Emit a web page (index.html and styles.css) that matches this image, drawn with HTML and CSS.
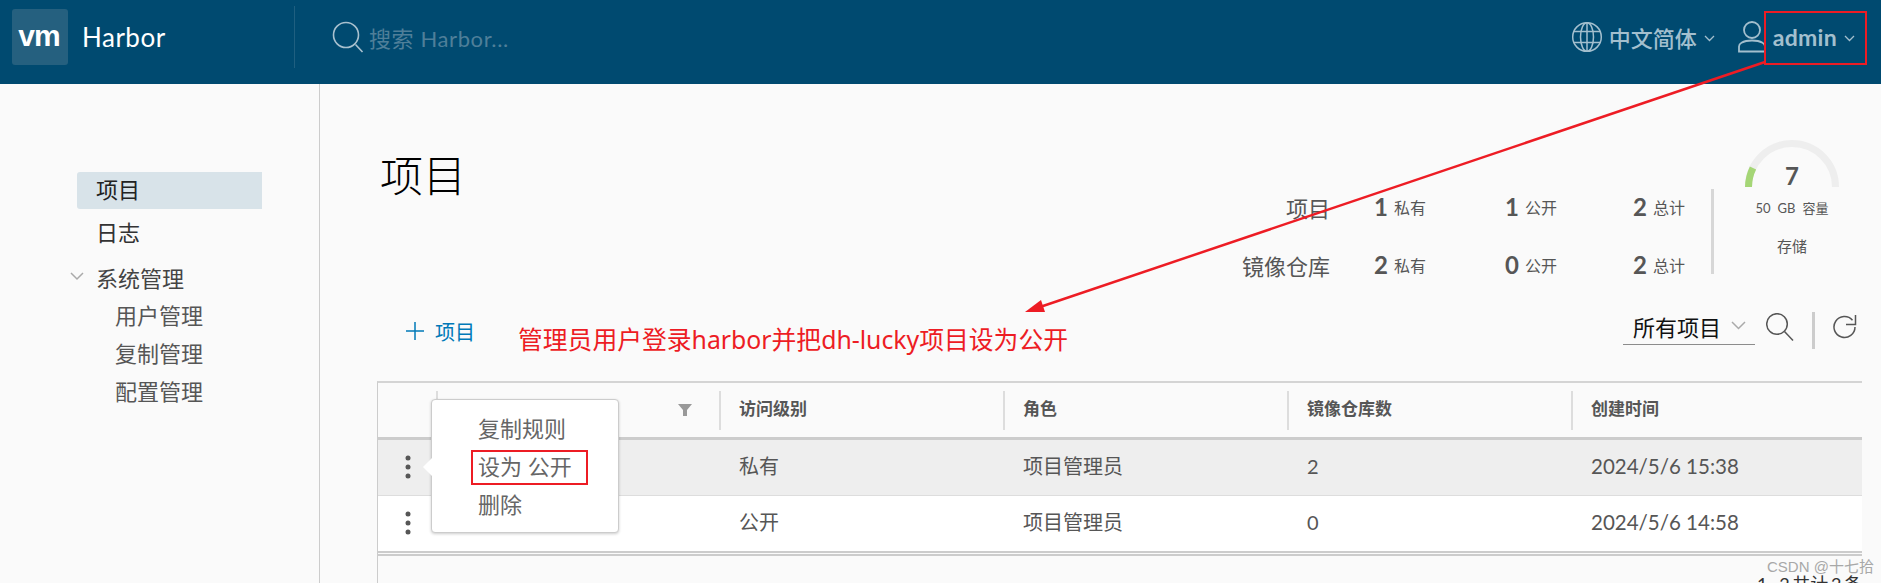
FILE: index.html
```html
<!DOCTYPE html>
<html lang="zh-CN">
<head>
<meta charset="utf-8">
<title>Harbor</title>
<link rel="stylesheet" href="styles.css">
</head>
<body>
<div class="app">
  <header class="topbar">
    <div class="logo"><span class="logo-vm">vm</span></div>
    <span class="brand">Harbor</span>
    <div class="top-search">
      <svg class="ic-search" width="32" height="32" viewBox="0 0 32 32"><circle cx="14" cy="14" r="12.5"/><path d="M23.5 23.5 30.500 31"/></svg>
      <span class="placeholder">搜索 Harbor...</span>
    </div>
    <div class="top-right">
      <svg class="ic-globe" width="32" height="32" viewBox="0 0 32 32"><circle cx="16" cy="16" r="14.300"/><ellipse cx="16" cy="16" rx="6.500" ry="14.300"/><path d="M16 1.700V30.300M3 10.500H29M3 21.500H29"/></svg>
      <span class="top-link lang">中文简体</span>
      <svg class="chev-top" width="11" height="7" viewBox="0 0 11 7"><path d="M1 1l4.500 4.500L10 1"/></svg>
      <svg class="ic-user" width="28" height="32" viewBox="0 0 28 32"><circle cx="14" cy="9" r="8"/><path d="M1 30.500v-5c0-2 1-3 2.500-3.800C6 20.300 10 19.500 14 19.500s8 .8 10.500 2.200c1.500.8 2.500 1.800 2.500 3.800v5z"/></svg>
      <span class="top-link user">admin</span>
      <svg class="chev-top" width="11" height="7" viewBox="0 0 11 7"><path d="M1 1l4.500 4.500L10 1"/></svg>
    </div>
  </header>

  <div class="body">
    <nav class="sidebar">
      <a class="nav-item active">项目</a>
      <a class="nav-item logs">日志</a>
      <div class="nav-group">
        <svg class="chev-nav" width="14" height="9" viewBox="0 0 14 9"><path d="M1 1l6 6 6-6"/></svg>
        <span>系统管理</span>
      </div>
      <a class="nav-sub">用户管理</a>
      <a class="nav-sub">复制管理</a>
      <a class="nav-sub">配置管理</a>
    </nav>

    <main class="main">
      <section class="page-head">
        <h1 class="title">项目</h1>
        <div class="stats">
          <div class="stat-label">项目</div>
          <div class="stat s1"><b>1</b><small>私有</small></div>
          <div class="stat s2"><b>1</b><small>公开</small></div>
          <div class="stat s3"><b>2</b><small>总计</small></div>
          <div class="stat-label">镜像仓库</div>
          <div class="stat s1"><b>2</b><small>私有</small></div>
          <div class="stat s2"><b>0</b><small>公开</small></div>
          <div class="stat s3"><b>2</b><small>总计</small></div>
        </div>
        <div class="stat-bar"></div>
        <div class="storage">
          <div class="gauge">
            <svg width="94" height="47" viewBox="0 0 94 47"><path class="g-track" d="M3.500 47A43.500 43.500 0 0 1 90.500 47"/><path class="g-fill" d="M3.500 47A43.500 43.500 0 0 1 8 28"/></svg>
            <span class="gauge-num">7</span>
          </div>
          <div class="capacity"><span>50</span><span>GB</span><span>容量</span></div>
          <div class="storage-label">存储</div>
        </div>
      </section>

      <section class="toolbar">
        <button class="add-btn">
          <svg width="18" height="18" viewBox="0 0 18 18"><path d="M9 0V18M0 9H18"/></svg>
          <span>项目</span>
        </button>
        <div class="tools">
          <div class="select"><span>所有项目</span><svg width="15" height="9" viewBox="0 0 15 9"><path d="M1 1l6.500 6.500L14 1"/></svg></div>
          <svg class="ic-tool-search" width="28" height="28" viewBox="0 0 28 28"><circle cx="11" cy="11" r="10.300"/><path d="M18.500 18.500 27 27.500"/></svg>
          <div class="tool-sep"></div>
          <svg class="ic-refresh" width="24" height="26" viewBox="0 0 24 26"><path d="M19.500 6.200A10.500 10.500 0 1 0 22 13"/><path d="M22.500 1V10.500H13"/></svg>
        </div>
      </section>

      <section class="table-wrap">
        <div class="table">
          <div class="row head">
            <div class="cell c-act"></div>
            <div class="cell c-name sep"><svg width="14" height="12" viewBox="0 0 14 12"><path d="M0 0H14L9 6V12H5V6z"/></svg></div>
            <div class="cell sep">访问级别</div>
            <div class="cell sep">角色</div>
            <div class="cell sep">镜像仓库数</div>
            <div class="cell sep">创建时间</div>
          </div>
          <div class="row selected">
            <div class="cell c-act"><svg class="dots" width="6" height="24" viewBox="0 0 6 24"><circle cx="3" cy="3" r="2.500"/><circle cx="3" cy="12" r="2.500"/><circle cx="3" cy="21" r="2.500"/></svg></div>
            <div class="cell"></div>
            <div class="cell">私有</div>
            <div class="cell">项目管理员</div>
            <div class="cell">2</div>
            <div class="cell date">2024/5/6 15:38</div>
          </div>
          <div class="row">
            <div class="cell c-act"><svg class="dots" width="6" height="24" viewBox="0 0 6 24"><circle cx="3" cy="3" r="2.500"/><circle cx="3" cy="12" r="2.500"/><circle cx="3" cy="21" r="2.500"/></svg></div>
            <div class="cell"></div>
            <div class="cell">公开</div>
            <div class="cell">项目管理员</div>
            <div class="cell">0</div>
            <div class="cell date">2024/5/6 14:58</div>
          </div>
        </div>
        <div class="pager">1 - 2 共计 2 条</div>
        <div class="popover">
          <span class="pop-arrow"></span>
          <a>复制规则</a>
          <a>设为 公开</a>
          <a>删除</a>
        </div>
      </section>
    </main>
  </div>

  <svg class="arrow" width="1881" height="583" viewBox="0 0 1881 583">
    <path class="arrow-line" d="M1765 62 1040 307"/>
    <path class="arrow-head" d="M1025 312 1041 300 1045 312z"/>
  </svg>
  <div class="mark mark-admin"></div>
  <div class="mark mark-public"></div>
  <div class="note">管理员用户登录harbor并把dh-lucky项目设为公开</div>
  <div class="watermark">CSDN @十七拾</div>
</div>
</body>
</html>
```

FILE: styles.css
```css
* { box-sizing: border-box; }
html, body { margin: 0; padding: 0; height: 583px; overflow: hidden; }
body {
  background: #fafafa;
  color: #565656;
  font-family: Lato, "Noto Sans CJK SC", sans-serif;
}
.app { position: relative; width: 1881px; height: 583px; overflow: hidden; display: flex; flex-direction: column; }

/* top bar */
.topbar { flex: none; height: 84px; background: #004a70; display: flex; align-items: center; padding-left: 12px; }
.logo { width: 56px; height: 56px; margin-top: -10px; background: #25607f; border-radius: 3px; display: flex; align-items: center; justify-content: center; }
.logo-vm { color: #fff; font: 700 30px/1 "Liberation Sans", sans-serif; letter-spacing: -1px; margin: -3px 0 0 -2px; }
.brand { color: #fff; font-size: 26px; margin: -10px 0 0 14px; letter-spacing: .5px; width: 212px; }
.top-search { align-self: flex-start; margin-top: 6px; height: 62px; border-left: 1px solid #1f5f80; padding-left: 37px; display: flex; align-items: center; gap: 5px; }
.ic-search { fill: none; stroke: #a9c1cf; stroke-width: 1.600; }
.placeholder { color: #4f7f99; font-size: 22px; letter-spacing: .6px; }
.top-right { margin-left: auto; display: flex; align-items: center; margin-top: -10px; padding-right: 26px; }
.ic-globe { fill: none; stroke: #a3bfce; stroke-width: 1.500; }
.top-link { color: #a3bfce; font-size: 22px; font-weight: 500; }
.lang { margin-left: 6px; }
.user { margin-left: 7px; font-size: 23px; letter-spacing: .3px; font-weight: 700; }
.chev-top { fill: none; stroke: #a3bfce; stroke-width: 1.300; margin-left: 7px; margin-top: 3px; }
.ic-user { fill: none; stroke: #a3bfce; stroke-width: 1.800; margin-left: 23px; }

/* body */
.body { flex: 1; min-height: 0; display: flex; }
.sidebar { flex: none; width: 320px; border-right: 1px solid #ccc; padding-top: 88px; font-size: 22px; }
.nav-item { display: block; margin-left: 77px; width: 185px; height: 37px; line-height: 37px; padding-left: 19px; color: #333; }
.nav-item.active { line-height: 35px; background: #d8e3e9; border-radius: 3px 0 0 3px; color: #222; }
.nav-item.logs { margin-top: 5px; }
.nav-group { display: flex; align-items: center; height: 37px; margin-top: 7px; padding-left: 70px; color: #444; }
.chev-nav { fill: none; stroke: #aaa; stroke-width: 1.500; margin-right: 12px; }
.nav-sub { display: block; height: 38px; line-height: 38px; padding-left: 115px; color: #565656; }
.nav-group + .nav-sub { margin-top: 2px; }

/* main */
.main { flex: 1; min-width: 0; display: flex; flex-direction: column; padding: 0 19px 0 57px; }
.page-head { flex: none; height: 216px; display: flex; align-items: flex-start; }
.title { margin: 67px 0 0 3px; font-size: 43px; font-weight: 300; line-height: 50px; color: #000; }
.stats { margin: 94px 0 0 auto; display: grid; grid-template-columns: auto 96px 131px 128px; grid-auto-rows: 58px; align-items: center; }
.stat-label { text-align: right; font-size: 22px; color: #565656; }
.stat { display: flex; justify-content: flex-end; align-items: center; gap: 6px; }
.stat b { font-size: 24px; font-weight: 700; line-height: 1; }
.stat small { font-size: 16px; }
.stat-bar { flex: none; width: 3px; height: 85px; margin: 105px 0 0 26px; background: #d7d7d7; }
.storage { flex: none; width: 94px; margin: 56px 23px 0 31px; text-align: center; }
.gauge { position: relative; height: 47px; }
.gauge svg { display: block; fill: none; stroke-width: 7; }
.g-track { stroke: #eee; }
.g-fill { stroke: #a5d676; }
.gauge-num { position: absolute; left: 0; right: 0; top: 24px; font-size: 24px; font-weight: 700; line-height: 1; }
.capacity { margin: 11px -10px 0; display: flex; justify-content: center; gap: 7px; font-size: 13px; line-height: 20px; }
.storage-label { margin-top: 18px; font-size: 15px; line-height: 20px; }

.toolbar { flex: none; height: 82px; display: flex; justify-content: space-between; align-items: center; padding: 0 5px 22px 29px; }
.add-btn { display: flex; align-items: center; gap: 11px; padding: 0; margin-top: 2px; border: 0; background: none; color: #0079b8; font: inherit; font-size: 20px; }
.add-btn svg { fill: none; stroke: #0079b8; stroke-width: 1.500; }
.tools { display: flex; align-items: center; }
.select { width: 132px; height: 38px; margin-top: -8px; border-bottom: 1px solid #8c8c8c; display: flex; align-items: center; padding: 0 9px 0 10px; justify-content: space-between; font-size: 22px; color: #111; }
.select svg { fill: none; stroke: #aaa; stroke-width: 1.500; }
.ic-tool-search { fill: none; stroke: #565656; stroke-width: 1.500; margin-left: 11px; margin-top: -6px; }
.tool-sep { width: 3px; height: 37px; background: #ccc; margin: 0 18px 0 18px; }
.ic-refresh { fill: none; stroke: #565656; stroke-width: 1.500; margin-top: -6px; }

/* table */
.table-wrap { position: relative; flex: 1; min-height: 0; border-left: 1px solid #ccc; border-top: 2px solid #d4d4d4; margin-top: -1px; }
.table { border-bottom: 5px double #ccc; }
.row { display: grid; grid-template-columns: 58px 283px 284px 284px 284px 291px; height: 56px; font-size: 20px; background: #fff; align-items: center; border-bottom: 1px solid #ddd; }
.row:last-child { border-bottom: 0; height: 55px; }
.row.head { height: 57px; background: #fafafa; border-bottom: 3px solid #ccc; font-size: 17px; font-weight: 700; }
.row.selected { background: #eee; }
.cell { padding: 0 0 4px 20px; }
.date { font-size: 20.500px; }
.c-act { padding: 0 0 2px; display: flex; justify-content: center; position: relative; left: 1px; }
.row.head .sep { padding: 0 0 0 18px; border-left: 2px solid #ddd; height: 39px; line-height: 35px; }
.row.head .c-name { display: flex; justify-content: flex-end; align-items: center; padding: 0 27px 0 0; }
.c-name svg { fill: #999; }
.dots { fill: #565656; }
.pager { margin: 16px 0 0; text-align: right; font-size: 18px; line-height: 24px; word-spacing: -2px; color: #333; white-space: nowrap; }

.popover { position: absolute; left: 53px; top: 16px; width: 188px; height: 134px; background: #fff; border: 1px solid #ccc; border-radius: 4px; box-shadow: 0 1px 3px rgba(0,0,0,.2); padding: 10px 0 0 46px; font-size: 22px; color: #666; display: flex; flex-direction: column; }
.popover a { height: 38px; line-height: 38px; white-space: nowrap; }
.pop-arrow { position: absolute; left: -9px; top: 57px; width: 0; height: 0; border: 10px solid transparent; border-left: 0; border-right-color: #fff; }

/* annotations over the screenshot */
.arrow { position: absolute; left: 0; top: 0; pointer-events: none; }
.arrow-line { stroke: #ed1c24; stroke-width: 2.500; fill: none; }
.arrow-head { fill: #ed1c24; }
.mark { position: absolute; border: 2px solid #ed1c24; }
.mark-admin { left: 1764px; top: 11px; width: 103px; height: 54px; }
.mark-public { left: 471px; top: 450px; width: 117px; height: 35px; }
.note { position: absolute; left: 518px; top: 321px; color: #ed1c24; font-size: 24.800px; line-height: 36px; white-space: nowrap; font-family: "Noto Sans", "Noto Sans CJK SC", sans-serif; }
.watermark { position: absolute; left: 1767px; top: 556px; color: #a8a8a8; font: 15px/22px "Liberation Sans", "Noto Sans CJK SC", sans-serif; white-space: nowrap; }
```
